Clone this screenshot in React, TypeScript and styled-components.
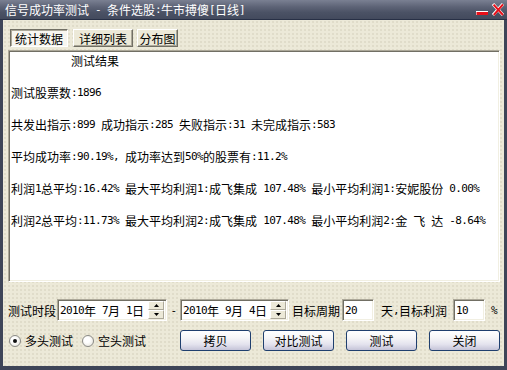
import React from "react";
import styled, { createGlobalStyle } from "styled-components";

const GlobalStyle = createGlobalStyle`
  html, body {
    margin: 0;
    padding: 0;
    background: #3e4558;
  }
  body {
    width: 507px;
    height: 370px;
    overflow: hidden;
    font-family: "Noto Sans CJK SC", "Noto Sans", sans-serif;
    font-size: 12px;
    color: #000;
  }
`;

const Window = styled.div`
  width: 507px;
  height: 370px;
  display: flex;
  flex-direction: column;
  background: #3e4558;
  box-sizing: border-box;
`;

const TitleBar = styled.div`
  height: 19px;
  border-bottom: 1px solid #283046;
  background: linear-gradient(180deg, #7a8092 0%, #5e6477 35%, #4b5265 65%, #434a5d 100%);
  color: #fff;
  display: flex;
  align-items: center;
  justify-content: space-between;
  padding: 0 3px 0 5px;
  line-height: 19px;
  white-space: pre;
`;

const TitleText = styled.div`
  display: flex;
  align-items: center;
  height: 19px;
  margin-top: -1px;
`;

const Body = styled.div`
  flex: 1;
  margin: 0 3px 4px 3px;
  background-color: #ece9d8;
  background-image: radial-gradient(circle, #e0dcc9 0.7px, transparent 0.9px);
  background-size: 4px 4px;
  display: flex;
  flex-direction: column;
  padding: 9px 4px 0 5px;
`;

const TabRow = styled.div`
  display: flex;
  margin-left: 2px;
  height: 18px;
`;

const Tab = styled.div<{ $w: number; $ml: number; $pressed?: boolean }>`
  width: ${(p) => p.$w}px;
  margin-left: ${(p) => p.$ml}px;
  height: 18px;
  box-sizing: border-box;
  display: flex;
  align-items: center;
  justify-content: center;
  white-space: pre;
  border: 1px solid;
  border-color: ${(p) =>
    p.$pressed ? "#716f64 #ffffff #ffffff #716f64" : "#ffffff #716f64 #716f64 #ffffff"};
  box-shadow: ${(p) =>
    p.$pressed ? "inset 1px 1px 0 #aca899" : "inset -1px -1px 0 #aca899"};
  background: ${(p) => (p.$pressed ? "#f7f6f0" : "#ece9d8")};
  padding-top: ${(p) => (p.$pressed ? 1 : 0)}px;
`;

const ResultBox = styled.div`
  margin-top: 3px;
  width: 492px;
  height: 232px;
  box-sizing: border-box;
  background: #fff;
  border: 1px solid;
  border-color: #aca899 #ffffff #ffffff #aca899;
  box-shadow: inset 1px 1px 0 #716f64, inset -1px -1px 0 #f1efe2;
  padding: 2px 2px 0 2px;
  overflow: hidden;
`;

const ResultLine = styled.div`
  height: 16px;
  line-height: 16px;
  white-space: pre;
  display: flex;
  align-items: center;
`;

const Latin = styled.span`
  font-family: "DejaVu Sans Mono", "Liberation Mono", monospace;
  font-size: 11px;
  letter-spacing: -0.62px;
  white-space: pre;
`;

const Cjk = styled.span`
  font-family: "Noto Sans CJK SC", sans-serif;
  font-size: 12px;
  white-space: pre;
`;

const Row = styled.div<{ $mt: number; $h: number }>`
  display: flex;
  align-items: center;
  margin-top: ${(p) => p.$mt}px;
  height: ${(p) => p.$h}px;
  white-space: nowrap;
`;

const Label = styled.div<{ $ml?: number }>`
  margin-left: ${(p) => p.$ml ?? 0}px;
  white-space: pre;
  flex-shrink: 0;
  display: flex;
  align-items: center;
`;

const Sunken = styled.div<{ $w: number; $ml?: number }>`
  width: ${(p) => p.$w}px;
  margin-left: ${(p) => p.$ml ?? 0}px;
  flex-shrink: 0;
  height: 22px;
  box-sizing: border-box;
  background: #fff;
  border: 1px solid;
  border-color: #aca899 #ffffff #ffffff #aca899;
  box-shadow: inset 1px 1px 0 #716f64, inset -1px -1px 0 #f1efe2;
  display: flex;
  align-items: center;
  padding: 0 2px 0 2px;
  white-space: pre;
`;

const DateText = styled.div`
  flex: 1;
  display: flex;
  align-items: center;
`;

const Spinner = styled.div`
  width: 16px;
  height: 18px;
  display: flex;
  flex-direction: column;
`;

const SpinBtn = styled.div`
  flex: 1;
  box-sizing: border-box;
  background: #ece9d8;
  border: 1px solid;
  border-color: #ffffff #aca899 #aca899 #ffffff;
  display: flex;
  align-items: center;
  justify-content: center;
`;

const Dash = styled.div`
  width: 13px;
  flex-shrink: 0;
  display: flex;
  justify-content: center;
`;

const RadioItem = styled.div<{ $ml: number }>`
  display: flex;
  align-items: center;
  flex-shrink: 0;
  white-space: nowrap;
  margin-left: ${(p) => p.$ml}px;
`;

const RadioCircle = styled.div<{ $checked?: boolean }>`
  width: 12px;
  height: 12px;
  flex-shrink: 0;
  box-sizing: border-box;
  border-radius: 50%;
  border: 1px solid #8a8a86;
  background: radial-gradient(circle at 40% 40%, #ffffff 30%, #e2e0d6 100%);
  display: flex;
  align-items: center;
  justify-content: center;
  margin-right: 4px;
  &::after {
    content: "";
    display: ${(p) => (p.$checked ? "block" : "none")};
    width: 4px;
    height: 4px;
    border-radius: 50%;
    background: #111;
  }
`;

const ButtonGroup = styled.div`
  display: flex;
  flex-shrink: 0;
  margin-left: 34px;
  gap: 12px;
`;

const XpButton = styled.div`
  width: 71px;
  height: 21px;
  flex-shrink: 0;
  box-sizing: border-box;
  border: 1px solid #1f3f6e;
  border-radius: 3px;
  background: linear-gradient(180deg, #ffffff 0%, #f6f6f8 35%, #e4e3ee 70%, #c5c4d8 100%);
  display: flex;
  align-items: center;
  justify-content: center;
  white-space: pre;
`;

const Mixed: React.FC<{ text: string }> = ({ text }) => {
  const parts = text.split(/([\x00-\x7f]+)/);
  return (
    <>
      {parts.map((p, i) =>
        p === "" ? null : /^[\x00-\x7f]/.test(p) ? (
          <Latin key={i}>{p}</Latin>
        ) : (
          <Cjk key={i}>{p}</Cjk>
        )
      )}
    </>
  );
};

const WindowControls = () => (
  <svg width="30" height="19" viewBox="0 0 30 19">
    <rect x="2" y="11" width="12" height="4" fill="#ffffff" />
    <rect x="2.5" y="12" width="11.5" height="3" fill="#e8101a" />
    <path d="M19 4 L29 15 M29 4 L19 15" stroke="#ffffff" strokeWidth="3.2" />
    <path d="M19.6 4.6 L29 15 M29 4.4 L19.8 15" stroke="#e8101a" strokeWidth="2" />
  </svg>
);

const ArrowUp = () => (
  <svg width="5" height="3" viewBox="0 0 5 3">
    <path d="M2.5 0 L5 3 L0 3 Z" fill="#000" />
  </svg>
);
const ArrowDown = () => (
  <svg width="5" height="3" viewBox="0 0 5 3">
    <path d="M0 0 L5 0 L2.5 3 Z" fill="#000" />
  </svg>
);

const DateBox: React.FC<{ w: number; ml?: number; text: string }> = ({ w, ml, text }) => (
  <Sunken $w={w} $ml={ml}>
    <DateText>
      <Mixed text={text} />
    </DateText>
    <Spinner>
      <SpinBtn>
        <ArrowUp />
      </SpinBtn>
      <SpinBtn>
        <ArrowDown />
      </SpinBtn>
    </Spinner>
  </Sunken>
);

const lines = [
  "          测试结果",
  "",
  "测试股票数:1896",
  "",
  "共发出指示:899 成功指示:285 失败指示:31 未完成指示:583",
  "",
  "平均成功率:90.19%, 成功率达到50%的股票有:11.2%",
  "",
  "利润1总平均:16.42% 最大平均利润1:成飞集成 107.48% 最小平均利润1:安妮股份 0.00%",
  "",
  "利润2总平均:11.73% 最大平均利润2:成飞集成 107.48% 最小平均利润2:金 飞 达 -8.64%",
];

export default function App() {
  return (
    <>
      <GlobalStyle />
      <Window>
        <TitleBar>
          <TitleText>
            <Mixed text="信号成功率测试 - 条件选股:牛市搏傻[日线]" />
          </TitleText>
          <WindowControls />
        </TitleBar>
        <Body>
          <TabRow>
            <Tab $w={58} $ml={0} $pressed>
              统计数据
            </Tab>
            <Tab $w={60} $ml={5}>
              详细列表
            </Tab>
            <Tab $w={41} $ml={4}>
              分布图
            </Tab>
          </TabRow>
          <ResultBox>
            {lines.map((l, i) => (
              <ResultLine key={i}>
                <Mixed text={l} />
              </ResultLine>
            ))}
          </ResultBox>
          <Row $mt={17} $h={22}>
            <Label>测试时段</Label>
            <DateBox w={110} ml={1} text="2010年 7月 1日" />
            <Dash>
              <Latin>-</Latin>
            </Dash>
            <DateBox w={109} text="2010年 9月 4日" />
            <Label $ml={3}>目标周期</Label>
            <Sunken $w={32} $ml={2}>
              <Latin>20</Latin>
            </Sunken>
            <Label $ml={7}>
              <Mixed text="天,目标利润" />
            </Label>
            <Sunken $w={32} $ml={6}>
              <Latin>10</Latin>
            </Sunken>
            <Label $ml={6}>
              <Latin>%</Latin>
            </Label>
          </Row>
          <Row $mt={9} $h={21}>
            <RadioItem $ml={1}>
              <RadioCircle $checked />
              多头测试
            </RadioItem>
            <RadioItem $ml={9}>
              <RadioCircle />
              空头测试
            </RadioItem>
            <ButtonGroup>
              <XpButton>拷贝</XpButton>
              <XpButton>对比测试</XpButton>
              <XpButton>测试</XpButton>
              <XpButton>关闭</XpButton>
            </ButtonGroup>
          </Row>
        </Body>
      </Window>
    </>
  );
}
